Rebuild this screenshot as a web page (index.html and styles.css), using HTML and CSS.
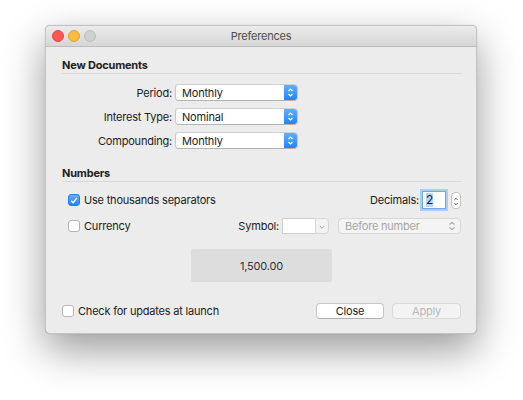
FILE: index.html
```html
<!DOCTYPE html>
<html lang="en">
<head>
  <meta charset="UTF-8">
  <title>Preferences</title>
  <link rel="stylesheet" href="styles.css">
</head>
<body>

  <div class="window">
    <!-- Title bar -->
    <div class="titlebar">
      <div class="lights">
        <span class="light red"></span>
        <span class="light yellow"></span>
        <span class="light gray"></span>
      </div>
      <div class="title">Preferences</div>
    </div>

    <div class="content">
      <!-- New Documents -->
      <div class="section-title first">New Documents</div>
      <div class="form-grid">
        <div class="label">Period:</div>
        <div class="popup">
          <span class="popup-text">Monthly</span>
          <span class="popup-arrows">
            <svg width="13" height="17" viewBox="0 0 13 17"><path d="M4.5 7 L6.5 5 L8.5 7 M4.5 10 L6.5 12 L8.5 10" fill="none" stroke="#fff" stroke-width="1.2"/></svg>
          </span>
        </div>
        <div class="label">Interest Type:</div>
        <div class="popup">
          <span class="popup-text">Nominal</span>
          <span class="popup-arrows">
            <svg width="13" height="17" viewBox="0 0 13 17"><path d="M4.5 7 L6.5 5 L8.5 7 M4.5 10 L6.5 12 L8.5 10" fill="none" stroke="#fff" stroke-width="1.2"/></svg>
          </span>
        </div>
        <div class="label">Compounding:</div>
        <div class="popup">
          <span class="popup-text">Monthly</span>
          <span class="popup-arrows">
            <svg width="13" height="17" viewBox="0 0 13 17"><path d="M4.5 7 L6.5 5 L8.5 7 M4.5 10 L6.5 12 L8.5 10" fill="none" stroke="#fff" stroke-width="1.2"/></svg>
          </span>
        </div>
      </div>

      <!-- Numbers -->
      <div class="section-title second">Numbers</div>

      <div class="row row-sep">
        <label class="check indent">
          <span class="box checked">
            <svg width="11" height="11" viewBox="0 0 11 11"><path d="M2.5 5.8 L4.6 8 L8.6 2.8" fill="none" stroke="#fff" stroke-width="1.5"/></svg>
          </span>
          Use thousands separators
        </label>
        <div class="right-group">
          <span class="label-inline">Decimals:</span>
          <span class="num-field"><span class="sel">2</span></span>
          <span class="stepper">
            <svg width="10" height="17" viewBox="0 0 10 17"><path d="M3 6.5 L5 4.5 L7 6.5 M3 10.5 L5 12.5 L7 10.5" fill="none" stroke="#444" stroke-width="1.2"/></svg>
          </span>
        </div>
      </div>

      <div class="row row-cur">
        <label class="check indent">
          <span class="box"></span>
          Currency
        </label>
        <div class="right-group">
          <span class="label-inline">Symbol:</span>
          <span class="combo">
            <span class="combo-field"></span>
            <span class="combo-btn">
              <svg width="14" height="16" viewBox="0 0 14 16"><path d="M4.5 7 L7 9.5 L9.5 7" fill="none" stroke="#9a9a9a" stroke-width="1.1"/></svg>
            </span>
          </span>
          <span class="popup disabled">
            <span class="popup-text">Before number</span>
            <svg width="12" height="16" viewBox="0 0 12 16"><path d="M3.5 6.5 L6 4.5 L8.5 6.5 M3.5 9.5 L6 11.5 L8.5 9.5" fill="none" stroke="#a8a8a8" stroke-width="1.1"/></svg>
          </span>
        </div>
      </div>

      <div class="preview">1,500.00</div>

      <div class="row row-bottom">
        <label class="check">
          <span class="box"></span>
          Check for updates at launch
        </label>
        <div class="buttons">
          <button class="btn">Close</button>
          <button class="btn disabled">Apply</button>
        </div>
      </div>
    </div>
  </div>

</body>
</html>
```

FILE: styles.css
```css
* {
  margin: 0;
  padding: 0;
  box-sizing: border-box;
}
body {
  font-family: 'Inter', 'Liberation Sans', sans-serif;
  font-size: 11px;
  letter-spacing: -0.2px;
  color: #222;
  background-color: #fff;
  width: 523px;
  height: 400px;
  overflow: hidden;
}
.window {
  margin: 25px 0 0 45px;
  width: 432px;
  height: 309px;
  background-color: #ececec;
  border-radius: 5px;
  border: 1px solid #c4c4c4;
  box-shadow: 0 16px 40px rgba(0, 0, 0, 0.4), 0 0 1px rgba(0, 0, 0, 0.3);
  overflow: hidden;
}

/* Title bar */
.titlebar {
  height: 21px;
  display: flex;
  align-items: center;
  position: relative;
  background: linear-gradient(#ebebeb, #d6d6d6);
  border-bottom: 1px solid #bdbdbd;
}
.lights {
  display: flex;
  gap: 4px;
  padding-left: 6px;
}
.light {
  width: 12px;
  height: 12px;
  border-radius: 50%;
}
.red { background-color: #fc5753; border: 1px solid #df4744; }
.yellow { background-color: #fdbc40; border: 1px solid #de9f34; }
.gray { background-color: #d0d0d0; border: 1px solid #bdbdbd; }
.title {
  position: absolute;
  left: 0;
  right: 0;
  text-align: center;
  color: #4d4d4d;
  font-size: 11px;
  pointer-events: none;
}

/* Content */
.content {
  padding: 0 15px 0 16px;
}
.section-title {
  font-weight: 700;
  line-height: 14px;
  padding-bottom: 1px;
  border-bottom: 1px solid #d9d9d9;
}
.section-title.first { margin-top: 11px; }
.section-title.second { margin-top: 17px; }

.form-grid {
  margin-top: 10px;
  display: grid;
  grid-template-columns: 110px 123px;
  column-gap: 3px;
  row-gap: 7px;
  align-items: center;
}
.label {
  text-align: right;
}
.popup {
  height: 17px;
  display: flex;
  align-items: center;
  justify-content: space-between;
  background-color: #fff;
  border: 1px solid #c8c8c8;
  border-top-color: #d0d0d0;
  border-bottom-color: #b4b4b4;
  border-radius: 4px;
  overflow: hidden;
}
.popup-text {
  padding-left: 6px;
}
.popup-arrows {
  width: 13px;
  height: 17px;
  display: flex;
  background: linear-gradient(#6ab2fb, #1c80fb);
}

/* Numbers rows */
.row {
  display: flex;
  align-items: center;
  justify-content: space-between;
}
.row-sep { margin-top: 7px; height: 22px; }
.row-cur { margin-top: 7px; height: 16px; }
.row-bottom { margin-top: 21px; height: 16px; }

.check {
  display: flex;
  align-items: center;
  gap: 4px;
}
.check.indent { padding-left: 6px; }
.box {
  width: 12px;
  height: 12px;
  border-radius: 3px;
  background-color: #fff;
  border: 1px solid #b4b4b4;
  display: flex;
}
.box.checked {
  background: linear-gradient(#68b0fb, #1f84fb);
  border-color: #2a7de6;
}
.right-group {
  display: flex;
  align-items: center;
}
.label-inline {
  margin-right: 3px;
}
.num-field {
  width: 24px;
  height: 18px;
  background-color: #fff;
  border: 1px solid #6fa9ea;
  box-shadow: 0 0 0 2px #a9cdf6;
  display: flex;
  align-items: center;
  padding-left: 3px;
  font-size: 12px;
}
.sel {
  background-color: #b3d6fd;
  line-height: 14px;
}
.stepper {
  margin-left: 5px;
  width: 10px;
  height: 17px;
  background-color: #fff;
  border: 1px solid #c4c4c4;
  border-radius: 4px;
  display: flex;
  overflow: hidden;
}
.combo {
  display: flex;
  height: 16px;
}
.combo-field {
  width: 33px;
  background-color: #fff;
  border: 1px solid #cfcfcf;
  border-right: none;
}
.combo-btn {
  width: 14px;
  background-color: #f3f3f3;
  border: 1px solid #d6d6d6;
  border-radius: 0 4px 4px 0;
  display: flex;
}
.popup.disabled {
  margin-left: 9px;
  width: 123px;
  height: 16px;
  background-color: #f4f4f4;
  border-color: #d8d8d8;
  color: #a6a6a6;
  padding-right: 2px;
}

.preview {
  margin: 15px auto 0;
  width: 141px;
  height: 33px;
  background-color: #dddddd;
  border-radius: 2px;
  display: flex;
  align-items: center;
  justify-content: center;
  color: #333;
}

.buttons {
  display: flex;
  gap: 8px;
}
.btn {
  width: 68px;
  height: 16px;
  font-family: inherit;
  font-size: 11px;
  letter-spacing: -0.2px;
  color: #222;
  background-color: #fff;
  border: 1px solid #c6c6c6;
  border-bottom-color: #b0b0b0;
  border-radius: 4px;
}
.btn.disabled {
  width: 69px;
  color: #b8b8b8;
  background-color: #f3f3f3;
  border-color: #d9d9d9;
}
```
